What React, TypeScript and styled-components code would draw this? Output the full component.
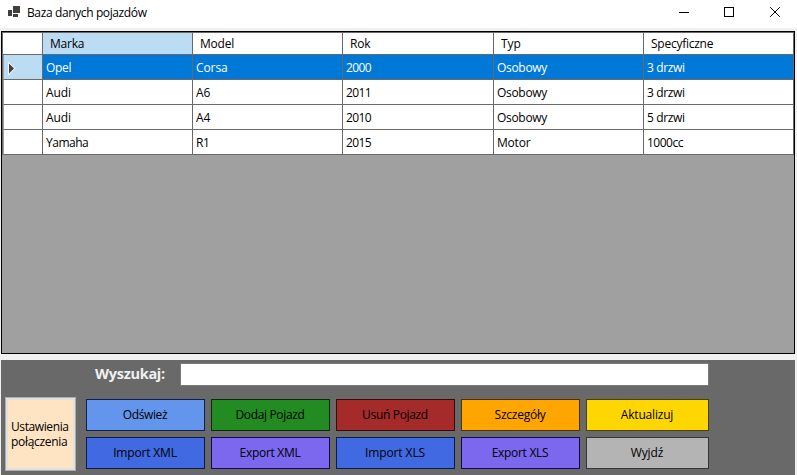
import React from 'react';
import styled, { createGlobalStyle } from 'styled-components';

const Global = createGlobalStyle`
  *, *::before, *::after { box-sizing: border-box; }
  body { margin: 0; background: #f0f0f0; overflow: hidden; }
`;

const Window = styled.div`
  width: 797px;
  height: 475px;
  display: flex;
  flex-direction: column;
  background: #f0f0f0;
  color: #000;
  font: 12px/16px 'Open Sans', 'Noto Sans', sans-serif;
`;

const TitleBar = styled.header`
  height: 28px;
  flex: none;
  display: flex;
  background: #fff;
`;

const AppIcon = styled.svg`
  width: 14px;
  height: 12px;
  flex: none;
  margin: 6px 6px 0 7px;
`;

const Title = styled.div`
  flex: 1;
  padding-top: 5px;
`;

const Controls = styled.svg`
  width: 120px;
  height: 28px;
`;

const Fit = styled.span<{ $ls?: number }>`
  white-space: pre;
  letter-spacing: ${(p) => p.$ls ?? 0}px;
`;

const Grid = styled.main`
  width: 794px;
  height: 323px;
  flex: none;
  margin: 3px 0 6px 1px;
  border: 1px solid #000;
  background: #a0a0a0;
`;

const Table = styled.div`
  width: 792px;
  border-top: 1px solid #696969;
  border-left: 1px solid #696969;
  background: #fff;
`;

const Row = styled.div<{ $head?: boolean; $selected?: boolean }>`
  height: ${(p) => (p.$head ? 22 : 25)}px;
  display: grid;
  grid-template-columns: 40px 150px 150px 151px 150px 150px;
  background: ${(p) => (p.$selected ? '#0078d7' : '#fff')};
  color: ${(p) => (p.$selected ? '#fff' : '#000')};
`;

const Cell = styled.div<{ $head?: boolean; $marked?: boolean }>`
  display: flex;
  align-items: center;
  padding-left: ${(p) => (p.$head ? 7 : 3)}px;
  padding-top: ${(p) => (p.$head ? 1 : 2)}px;
  border-right: 1px solid #696969;
  border-bottom: 1px solid #696969;
  background: ${(p) => (p.$marked ? '#bcdcf4' : 'transparent')};
`;

const RowHeader = styled(Cell)`
  border-left: 1px solid #a0a0a0;
  padding: 2px 0 0 4px;
`;

const Marker = styled.svg`
  width: 9px;
  height: 13px;
  flex: none;
`;

const Panel = styled.footer`
  width: 794px;
  height: 115px;
  flex: none;
  margin-left: 1px;
  background: #696969;
`;

const SearchRow = styled.label`
  height: 37px;
  display: flex;
  padding: 3px 0 0 94px;
  color: #f0f0f0;
  font-size: 14.5px;
  font-weight: 700;
  line-height: 21px;
`;

const SearchLabel = styled.span`
  width: 85px;
`;

const SearchInput = styled.input`
  width: 529px;
  height: 23px;
  padding: 0 4px;
  border: 1px solid #7a7a7a;
  border-radius: 0;
  background: #fff;
  outline: none;
`;

const Actions = styled.div`
  display: flex;
  padding-left: 4px;
`;

const SettingsButton = styled.button`
  width: 71px;
  height: 74px;
  display: flex;
  flex-direction: column;
  justify-content: center;
  align-items: flex-start;
  padding: 0 0 1px 5px;
  border: 1px solid #adadad;
  box-shadow: inset 0 0 0 2px #e1e1e1;
  background: #ffe4c4;
  color: #000;
  font: inherit;
  line-height: 15px;
`;

const ButtonGrid = styled.div`
  display: grid;
  grid-template-columns: 119px 119px 119px 119px 123px;
  grid-auto-rows: 32px;
  gap: 6px;
  padding: 2px 0 0 10px;
`;

const ActionButton = styled.button<{ $fill: string; $edge: string }>`
  padding: 0 1px 0 0;
  border: 1px solid ${(p) => p.$edge};
  background: ${(p) => p.$fill};
  color: #000;
  font: inherit;
`;

type Label = [string, number];

const headers: Label[] = [['Marka', -0.2], ['Model', -0.2], ['Rok', -0.2], ['Typ', 0], ['Specyficzne', -0.25]];
const vehicles: Label[][] = [
  [['Opel', -0.3], ['Corsa', -0.1], ['2000', -0.6], ['Osobowy', -0.3], ['3 drzwi', -0.35]],
  [['Audi', -0.1], ['A6', -0.1], ['2011', -0.6], ['Osobowy', -0.3], ['3 drzwi', -0.35]],
  [['Audi', -0.1], ['A4', -0.1], ['2010', -0.6], ['Osobowy', -0.3], ['5 drzwi', -0.35]],
  [['Yamaha', -0.5], ['R1', -0.3], ['2015', -0.6], ['Motor', -0.2], ['1000cc', -0.5]],
];
const actions: [string, number, string, string][] = [
  ['Odśwież', -0.4, '#6495ed', '#0b2250'],
  ['Dodaj Pojazd', -0.33, '#228b22', '#0a2a0a'],
  ['Usuń Pojazd', -0.33, '#a52a2a', '#320d0d'],
  ['Szczegóły', -0.25, '#ffa500', '#4d3200'],
  ['Aktualizuj', -0.2, '#ffd700', '#4d4100'],
  ['Import XML', -0.17, '#4169e1', '#0a1a4a'],
  ['Export XML', -0.28, '#7b68ee', '#120757'],
  ['Import XLS', -0.1, '#4169e1', '#0a1a4a'],
  ['Export XLS', -0.3, '#7b68ee', '#120757'],
  ['Wyjdź', -0.1, '#b4b4b4', '#363636'],
];

export default function App() {
  return (
    <>
      <Global />
      <Window>
        <TitleBar>
          <AppIcon viewBox="0 0 14 12" fill="#404040" shapeRendering="crispEdges">
            <path d="M6 0h7v7H6zM1 4h4v6H1zM6 8h5v3H6z" />
          </AppIcon>
          <Title><Fit $ls={-0.38}>Baza danych pojazdów</Fit></Title>
          <Controls viewBox="677 0 120 28" fill="none" stroke="#000">
            <path d="M679 12.5h10M724.5 7.5h9v9h-9z" shapeRendering="crispEdges" />
            <path d="M770.2 7.2l9.6 9.6M779.8 7.2l-9.6 9.6" />
          </Controls>
        </TitleBar>
        <Grid>
          <Table>
            <Row $head>
              <Cell />
              {headers.map(([text, ls], i) => (
                <Cell key={text} $head $marked={i === 0}><Fit $ls={ls}>{text}</Fit></Cell>
              ))}
            </Row>
            {vehicles.map((vehicle, r) => (
              <Row key={r} $selected={r === 0}>
                <RowHeader $marked={r === 0}>
                  {r === 0 && (
                    <Marker viewBox="0 0 9 13">
                      <path d="M1 1.5v10l5-5z" fill="#404040" stroke="#f4f4f4" strokeWidth="2" paintOrder="stroke" />
                    </Marker>
                  )}
                </RowHeader>
                {vehicle.map(([text, ls], i) => (
                  <Cell key={i}><Fit $ls={ls}>{text}</Fit></Cell>
                ))}
              </Row>
            ))}
          </Table>
        </Grid>
        <Panel>
          <SearchRow>
            <SearchLabel><Fit $ls={-0.28}>Wyszukaj:</Fit></SearchLabel>
            <SearchInput />
          </SearchRow>
          <Actions>
            <SettingsButton>
              <Fit $ls={-0.4}>Ustawienia</Fit>
              <Fit $ls={-0.3}>połączenia</Fit>
            </SettingsButton>
            <ButtonGrid>
              {actions.map(([text, ls, fill, edge]) => (
                <ActionButton key={text} $fill={fill} $edge={edge}><Fit $ls={ls}>{text}</Fit></ActionButton>
              ))}
            </ButtonGrid>
          </Actions>
        </Panel>
      </Window>
    </>
  );
}
